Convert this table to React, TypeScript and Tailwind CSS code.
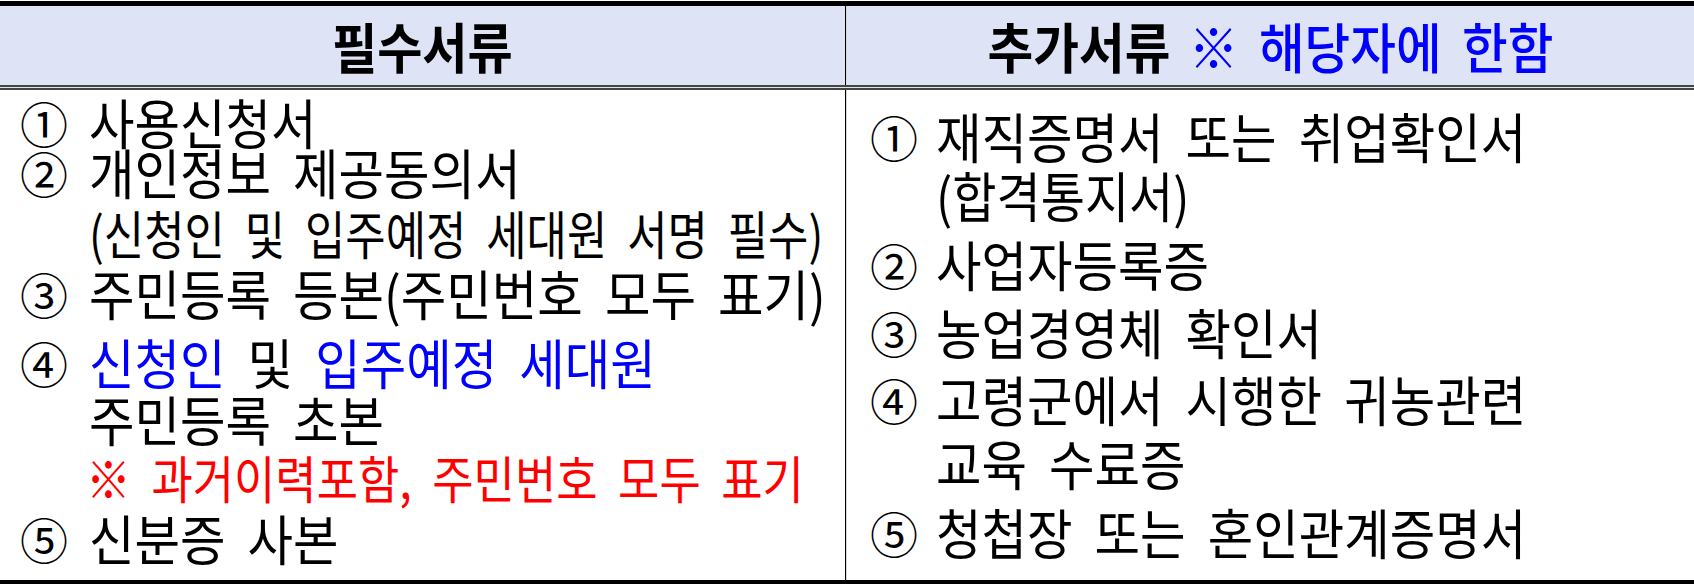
import type { ReactNode } from "react";

const FONT = { fontFamily: '"Noto Sans CJK KR", "Noto Sans", sans-serif' };

interface Line {
  num?: string;
  mt: string;
  // horizontal squeeze of the line, like the condensed glyphs in the original
  sx?: string;
  content: ReactNode;
}

const required: Line[] = [
  { num: "①", mt: "mt-[6px]", content: "사용신청서" },
  { num: "②", mt: "-mt-[2px]", content: "개인정보 제공동의서" },
  { mt: "mt-[9px]", sx: "scale-x-[0.843] text-[52px]", content: "(신청인 및 입주예정 세대원 서명 필수)" },
  { num: "③", mt: "mt-[8px]", content: "주민등록 등본(주민번호 모두 표기)" },
  {
    num: "④",
    mt: "mt-[17px]",
    content: (
      <>
        <span className="text-[#0000ff]">신청인</span> 및{" "}
        <span className="text-[#0000ff]">입주예정 세대원</span>
      </>
    ),
  },
  { mt: "mt-[5px]", content: "주민등록 초본" },
  {
    mt: "mt-[6px]",
    sx: "scale-x-[0.88] text-[51px] -ml-[3px] text-[#ff0000]",
    content: "※ 과거이력포함, 주민번호 모두 표기",
  },
  { num: "⑤", mt: "mt-[9px]", content: "신분증 사본" },
];

const additional: Line[] = [
  { num: "①", mt: "mt-[20px]", content: "재직증명서 또는 취업확인서" },
  { mt: "mt-[7px]", sx: "scale-x-[0.89] text-[54px]", content: "(합격통지서)" },
  { num: "②", mt: "mt-[17px]", content: "사업자등록증" },
  { num: "③", mt: "mt-[16px]", content: "농업경영체 확인서" },
  { num: "④", mt: "mt-[15px]", content: "고령군에서 시행한 귀농관련" },
  { mt: "mt-[12px]", content: "교육 수료증" },
  { num: "⑤", mt: "mt-[17px]", content: "청첩장 또는 혼인관계증명서" },
];

function DocList({ lines, numWidth }: { lines: Line[]; numWidth: string }) {
  return (
    <div className="flex flex-col">
      {lines.map((line, i) => (
        <div key={i} className={`flex h-[52px] items-center whitespace-nowrap ${line.mt}`}>
          <span className={`${numWidth} shrink-0 text-[48px] leading-[52px]`}>{line.num ?? ""}</span>
          <span
            className={`inline-block origin-left leading-[52px] ${line.sx ?? "scale-x-[0.916] text-[54px]"}`}
          >
            {line.content}
          </span>
        </div>
      ))}
    </div>
  );
}

export default function App() {
  return (
    <div className="h-[584px] w-[1694px] overflow-hidden bg-white pt-px text-black" style={FONT}>
      <div className="border-t-[5px] border-b-4 border-black">
        <div className="flex h-[84px] border-b-[5px] border-double border-[#444] bg-[#dee4f6] text-[54px] leading-none">
          <div className="flex w-[846px] items-center justify-center border-r border-black">
            <span className="inline-block scale-x-[0.91] font-bold">필수서류</span>
          </div>
          <div className="flex flex-1 items-center justify-center border-l border-[#d8d8d8]">
            <span className="inline-block scale-x-[0.92] whitespace-nowrap [word-spacing:10px]">
              <span className="font-bold">추가서류</span>
              <span className="ml-[20px] font-medium text-[#0000ff]">※ 해당자에 한함</span>
            </span>
          </div>
        </div>
        <div className="flex h-[490px] [word-spacing:12px]">
          <div className="w-[846px] border-r border-black pl-[20px]">
            <DocList lines={required} numWidth="w-[69px]" />
          </div>
          <div className="flex-1 border-l border-[#d8d8d8] pl-[23px]">
            <DocList lines={additional} numWidth="w-[66px]" />
          </div>
        </div>
      </div>
    </div>
  );
}
